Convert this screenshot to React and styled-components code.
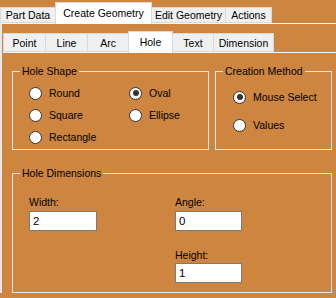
import styled, { createGlobalStyle } from 'styled-components';

const Global = createGlobalStyle`
    body {
        margin: 0;
        background: #cd853f;
    }
`;

const Screen = styled.div`
    width: 336px;
    height: 298px;
    overflow: hidden;
    background-color: #cd853f;
    font-family: "Liberation Sans", Arial, sans-serif;
    font-size: 10.5px;
    color: #000;
`;

const TabStrip = styled.div`
    display: flex;
    align-items: flex-end;
    height: ${props => props.height}px;
`;

const Tab = styled.div`
    box-sizing: border-box;
    width: ${props => props.width}px;
    height: ${props => props.active ? props.tall : props.short}px;
    margin-bottom: ${props => props.active ? -1 : 0}px;
    margin-right: -1px;
    position: relative;
    z-index: ${props => props.active ? 1 : 0};
    display: flex;
    align-items: ${props => props.active ? 'flex-start' : 'center'};
    justify-content: center;
    padding-top: ${props => props.active ? 4 : 1}px;
    background-color: ${props => props.active ? '#ffffff' : '#f0f0f0'};
    border: 1px solid #d9d9d9;
    border-bottom: ${props => props.active ? 'none' : '1px solid #d9d9d9'};
    line-height: 13px;
    white-space: nowrap;
`;

const OuterPage = styled.div`
    border-top: 1px solid #f8f8f8;
    border-left: 2px solid #e8e8e8;
    padding-left: 1px;
`;

const InnerPage = styled.div`
    border-top: 1px solid #f8f8f8;
    padding: 12px 4px 0 9px;
`;

const TopRow = styled.div`
    display: flex;
    gap: 6px;
`;

const Group = styled.fieldset`
    box-sizing: border-box;
    margin: 0;
    margin-top: ${props => props.top || 0}px;
    min-width: 0;
    width: ${props => props.width ? props.width + 'px' : 'auto'};
    flex: ${props => props.width ? 'none' : 1};
    height: ${props => props.height}px;
    border: 1px solid #e3e3e3;
    padding: 0;
`;

const Legend = styled.legend`
    margin-left: 7px;
    padding: 0 2px;
    line-height: 12px;
`;

const RadioGrid = styled.div`
    display: grid;
    grid-template-columns: ${props => props.columns};
    grid-template-rows: repeat(${props => props.rows}, ${props => props.rowHeight}px);
    grid-auto-flow: column;
    padding: ${props => props.pad};
`;

const RadioRow = styled.div`
    display: flex;
    align-items: center;
    gap: 7px;
`;

const Dot = styled.span`
    box-sizing: border-box;
    width: 13px;
    height: 13px;
    border-radius: 50%;
    border: 1px solid #333333;
    background: #ffffff;
    display: flex;
    align-items: center;
    justify-content: center;
    flex: none;

    &::after {
        content: '';
        width: 6px;
        height: 6px;
        border-radius: 50%;
        background: ${props => props.checked ? '#333333' : 'transparent'};
    }
`;

const DimGrid = styled.div`
    display: grid;
    grid-template-columns: 146px 1fr;
    padding: 17px 0 0 16px;
`;

const Field = styled.div`
    display: flex;
    flex-direction: column;
    align-items: flex-start;
    margin-top: ${props => props.gap || 0}px;
`;

const Label = styled.span`
    line-height: 13px;
    margin-bottom: ${props => props.space}px;
`;

const Input = styled.div`
    box-sizing: border-box;
    width: ${props => props.width}px;
    height: 20px;
    border: 1px solid #7a7a7a;
    background: #ffffff;
    padding: 0 3px;
    display: flex;
    align-items: center;
    font-size: 11.5px;
`;

const Radio = ({ label, checked }) => (
    <RadioRow>
        <Dot checked={checked}/>
        <span>{label}</span>
    </RadioRow>
);

const outerTabs = [
    { label: 'Part Data', width: 56 },
    { label: 'Create Geometry', width: 97, active: true },
    { label: 'Edit Geometry', width: 75 },
    { label: 'Actions', width: 47 },
];

const innerTabs = [
    { label: 'Point', width: 43 },
    { label: 'Line', width: 43 },
    { label: 'Arc', width: 42 },
    { label: 'Hole', width: 45, active: true },
    { label: 'Text', width: 42 },
    { label: 'Dimension', width: 61 },
];

export default () => {
    return (
        <Screen>
            <Global/>
            <TabStrip height={23}>
                {outerTabs.map(t => (
                    <Tab key={t.label} width={t.width} active={t.active} tall={22} short={16}>
                        {t.label}
                    </Tab>
                ))}
            </TabStrip>
            <OuterPage>
                <TabStrip height={28}>
                    {innerTabs.map(t => (
                        <Tab key={t.label} width={t.width} active={t.active} tall={22} short={19}>
                            {t.label}
                        </Tab>
                    ))}
                </TabStrip>
                <InnerPage>
                    <TopRow>
                        <Group width={197} height={85}>
                            <Legend>Hole Shape</Legend>
                            <RadioGrid columns='100px auto' rows={3} rowHeight={22} pad='5px 0 0 16px'>
                                <Radio label='Round'/>
                                <Radio label='Square'/>
                                <Radio label='Rectangle'/>
                                <Radio label='Oval' checked/>
                                <Radio label='Ellipse'/>
                            </RadioGrid>
                        </Group>
                        <Group height={85}>
                            <Legend>Creation Method</Legend>
                            <RadioGrid columns='auto' rows={2} rowHeight={28} pad='6px 0 0 17px'>
                                <Radio label='Mouse Select' checked/>
                                <Radio label='Values'/>
                            </RadioGrid>
                        </Group>
                    </TopRow>
                    <Group height={126} top={17}>
                        <Legend>Hole Dimensions</Legend>
                        <DimGrid>
                            <Field>
                                <Label space={2}>Width:</Label>
                                <Input width={68}>2</Input>
                            </Field>
                            <div>
                                <Field>
                                    <Label space={2}>Angle:</Label>
                                    <Input width={67}>0</Input>
                                </Field>
                                <Field gap={18}>
                                    <Label space={1}>Height:</Label>
                                    <Input width={67}>1</Input>
                                </Field>
                            </div>
                        </DimGrid>
                    </Group>
                </InnerPage>
            </OuterPage>
        </Screen>
    )
}
